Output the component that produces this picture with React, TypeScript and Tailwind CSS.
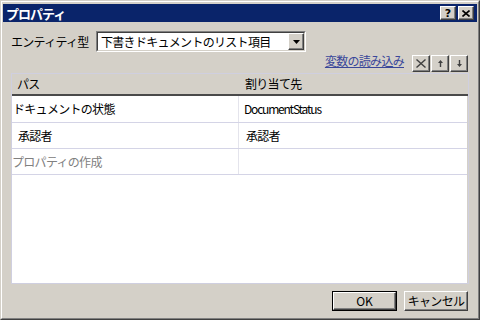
import React from "react";

const raised =
  "border border-t-white border-l-white border-r-[#404040] border-b-[#404040] shadow-[inset_-1px_-1px_0_#808080] bg-[#d4d0c8]";

function TitleButton({ children }: { children: React.ReactNode }) {
  return (
    <div className={`w-[16px] h-[14px] flex items-center justify-center ${raised}`}>
      {children}
    </div>
  );
}

function ToolButton({ children }: { children: React.ReactNode }) {
  return (
    <div className={`w-[18px] h-[17px] flex items-center justify-center ${raised}`}>
      {children}
    </div>
  );
}

export default function App() {
  const font = { fontFamily: '"Noto Sans CJK JP", "Noto Sans", sans-serif' };
  return (
    <div
      className="w-[480px] h-[320px] border border-t-[#d4d0c8] border-l-[#d4d0c8] border-r-[#404040] border-b-[#404040] bg-[#d4d0c8] text-black"
      style={font}
    >
      <div className="w-full h-full border border-t-white border-l-white border-r-[#808080] border-b-[#808080] p-px pt-[2px] flex flex-col">
        {/* title bar */}
        <div className="h-[18px] bg-[#0a246a] flex items-center justify-between pl-[3px] pr-[3px]">
          <span className="text-white font-bold text-[13px] leading-none tracking-[-1px]">
            プロパティ
          </span>
          <div className="flex gap-[2px]">
            <TitleButton>
              <span className="text-[11px] font-bold leading-none" style={{ fontFamily: '"DejaVu Sans", sans-serif' }}>?</span>
            </TitleButton>
            <TitleButton>
              <svg width="8" height="7" viewBox="0 0 8 7">
                <path d="M0.5 0.5 L7.5 6.5 M7.5 0.5 L0.5 6.5" stroke="#000" strokeWidth="1.6" />
              </svg>
            </TitleButton>
          </div>
        </div>

        <div className="flex-1 flex flex-col px-[8px]">
          {/* entity type */}
          <div className="mt-[9px] h-[21px] flex items-center">
            <span className="w-[85px] text-[12px] tracking-[-0.7px] leading-none">エンティティ型</span>
            <div className="w-[210px] h-[21px] flex items-center border border-t-[#808080] border-l-[#808080] border-r-white border-b-white">
              <div className="flex-1 h-full flex items-center bg-white border border-t-[#404040] border-l-[#404040] border-r-[#d4d0c8] border-b-[#d4d0c8]">
                <span className="flex-1 pl-[3px] text-[12px] tracking-[-0.7px] leading-none">
                  下書きドキュメントのリスト項目
                </span>
                <div className={`w-[16px] h-[17px] flex items-center justify-center ${raised}`}>
                  <svg width="7" height="4" viewBox="0 0 7 4">
                    <path d="M0 0 H7 L3.5 4 Z" fill="#000" />
                  </svg>
                </div>
              </div>
            </div>
          </div>

          {/* link + tool buttons */}
          <div className="mt-[3px] h-[17px] flex items-center justify-end pr-px">
            <span className="text-[12px] tracking-[-0.7px] leading-none text-[#3a479a] underline mr-[8px] -mt-[6px]">
              変数の読み込み
            </span>
            <div className="flex gap-[1px]">
              <ToolButton>
                <svg width="10" height="9" viewBox="0 0 10 9">
                  <path d="M0.5 0.5 L9.5 8.5 M9.5 0.5 L0.5 8.5" stroke="#404040" strokeWidth="1.4" />
                </svg>
              </ToolButton>
              <ToolButton>
                <svg width="5" height="7" viewBox="0 0 5 7">
                  <path d="M2.5 0 L5 3 H3.2 V7 H1.8 V3 H0 Z" fill="#404040" />
                </svg>
              </ToolButton>
              <ToolButton>
                <svg width="5" height="7" viewBox="0 0 5 7">
                  <path d="M2.5 7 L5 4 H3.2 V0 H1.8 V4 H0 Z" fill="#404040" />
                </svg>
              </ToolButton>
            </div>
          </div>

          {/* grid */}
          <div className="mt-[1px] flex-1 flex flex-col border border-[#cfcfe0]">
            <div className="h-[22px] flex items-center border-b-2 border-b-[#4a4a4a] bg-[#d4d0c8]">
              <span className="w-[228px] pl-[5px] text-[12px] tracking-[-0.7px] leading-none">パス</span>
              <span className="pl-[5px] text-[12px] tracking-[-0.7px] leading-none">割り当て先</span>
            </div>
            <div className="flex-1 bg-white mr-px">
              <div className="h-[27px] flex border-b border-b-[#d4d4e6]">
                <div className="w-[227px] border-r border-r-[#e4e4ec] flex items-center pl-[1px] text-[12px] tracking-[-0.7px] leading-none">
                  ドキュメントの状態
                </div>
                <div className="flex-1 flex items-center pl-[5px] text-[12px] tracking-[-1.2px] leading-none">
                  DocumentStatus
                </div>
              </div>
              <div className="h-[26px] flex border-b border-b-[#d4d4e6]">
                <div className="w-[227px] border-r border-r-[#e4e4ec] flex items-center pl-[6px] text-[12px] tracking-[-0.7px] leading-none">
                  承認者
                </div>
                <div className="flex-1 flex items-center pl-[7px] text-[12px] tracking-[-0.7px] leading-none">
                  承認者
                </div>
              </div>
              <div className="h-[26px] flex border-b border-b-[#d4d4e6]">
                <div className="w-[227px] border-r border-r-[#e4e4ec] flex items-center pl-[0px] text-[12px] tracking-[-0.7px] leading-none text-[#808080]">
                  プロパティの作成
                </div>
                <div className="flex-1" />
              </div>
            </div>
          </div>

          {/* bottom buttons */}
          <div className="mt-[7px] mb-[6px] flex justify-end gap-[7px] pr-px">
            <div className="w-[65px] h-[20px] border border-black">
              <div className={`w-full h-full flex items-center justify-center text-[12px] leading-none ${raised}`}>
                OK
              </div>
            </div>
            <div className={`w-[64px] h-[20px] flex items-center justify-center text-[12px] tracking-[-0.7px] leading-none ${raised}`}>
              キャンセル
            </div>
          </div>
        </div>
      </div>
    </div>
  );
}
